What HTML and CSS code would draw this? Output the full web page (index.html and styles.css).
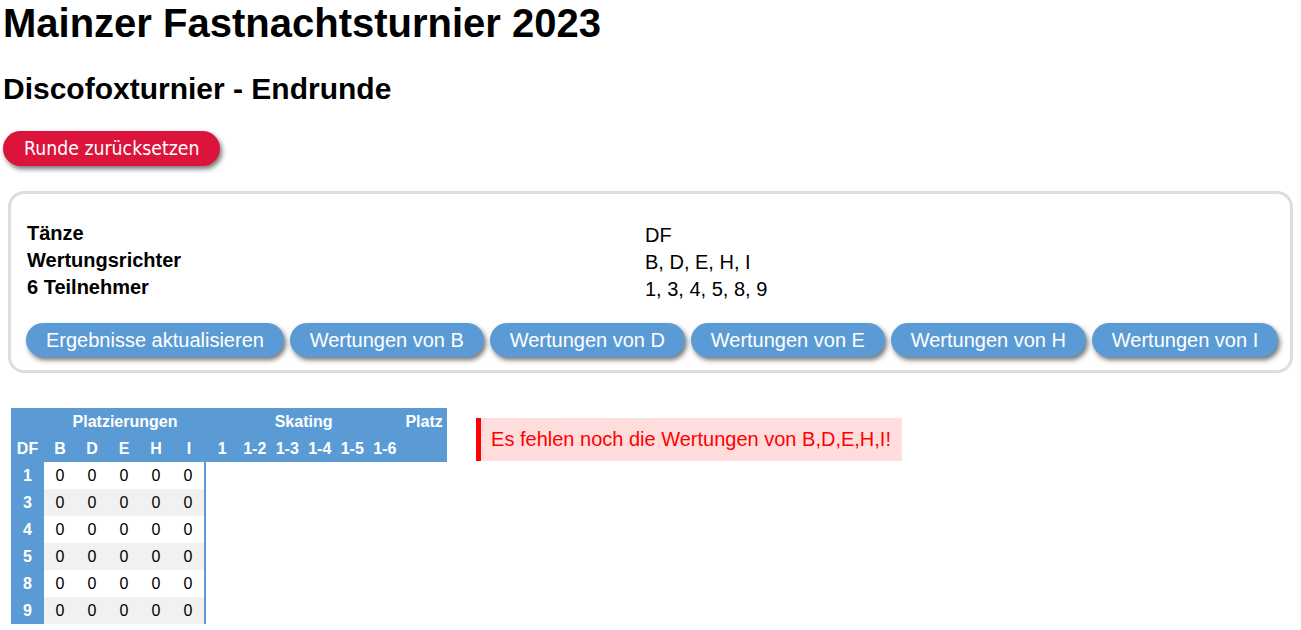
FILE: index.html
```html
<!DOCTYPE html>
<html lang="de">
<head>
<meta charset="utf-8">
<title>Mainzer Fastnachtsturnier 2023</title>
<link rel="stylesheet" href="styles.css">
</head>
<body>
<h1 class="title">Mainzer Fastnachtsturnier 2023</h1>
<h2 class="subtitle">Discofoxturnier - Endrunde</h2>
<button class="btn-reset" type="button">Runde zurücksetzen</button>
<section class="panel">
  <div class="info">
    <div class="info-label">Tänze</div><div class="info-value">DF</div>
    <div class="info-label">Wertungsrichter</div><div class="info-value">B, D, E, H, I</div>
    <div class="info-label">6 Teilnehmer</div><div class="info-value">1, 3, 4, 5, 8, 9</div>
  </div>
  <div class="actions">
    <button class="btn" type="button">Ergebnisse aktualisieren</button>
    <button class="btn" type="button">Wertungen von B</button>
    <button class="btn" type="button">Wertungen von D</button>
    <button class="btn" type="button">Wertungen von E</button>
    <button class="btn" type="button">Wertungen von H</button>
    <button class="btn" type="button">Wertungen von I</button>
  </div>
</section>
<div class="results">
  <table class="scores">
    <colgroup>
      <col class="c-df">
      <col class="c-p" span="4">
      <col class="c-last">
      <col class="c-s" span="6">
      <col class="c-platz">
    </colgroup>
    <thead>
      <tr><th></th><th colspan="5">Platzierungen</th><th colspan="6">Skating</th><th>Platz</th></tr>
      <tr><th>DF</th><th>B</th><th>D</th><th>E</th><th>H</th><th>I</th><th>1</th><th>1-2</th><th>1-3</th><th>1-4</th><th>1-5</th><th>1-6</th><th></th></tr>
    </thead>
    <tbody>
      <tr><th>1</th><td>0</td><td>0</td><td>0</td><td>0</td><td class="last">0</td></tr>
      <tr><th>3</th><td>0</td><td>0</td><td>0</td><td>0</td><td class="last">0</td></tr>
      <tr><th>4</th><td>0</td><td>0</td><td>0</td><td>0</td><td class="last">0</td></tr>
      <tr><th>5</th><td>0</td><td>0</td><td>0</td><td>0</td><td class="last">0</td></tr>
      <tr><th>8</th><td>0</td><td>0</td><td>0</td><td>0</td><td class="last">0</td></tr>
      <tr><th>9</th><td>0</td><td>0</td><td>0</td><td>0</td><td class="last">0</td></tr>
    </tbody>
  </table>
  <div class="alert">Es fehlen noch die Wertungen von B,D,E,H,I!</div>
</div>
</body>
</html>
```

FILE: styles.css
```css
body {
  margin: 0;
  padding: 0 2px;
  font-family: "Liberation Sans", Arial, sans-serif;
  font-size: 20px;
  color: #000;
  background: #fff;
}

.title {
  font-size: 40px;
  line-height: 46px;
  font-weight: bold;
  margin: 0 0 26px;
  padding-left: 1px;
}

.subtitle {
  font-size: 30px;
  line-height: 34px;
  font-weight: bold;
  margin: 0 0 25px;
  padding-left: 1px;
}

.btn-reset {
  display: block;
  margin-left: 1px;
  height: 35px;
  padding: 0 21px;
  border: none;
  border-radius: 18px;
  background: #dc143c;
  color: #fff;
  font-family: "DejaVu Sans Condensed", "DejaVu Sans", sans-serif;
  font-size: 19.3px;
  box-shadow: 2px 3px 5px rgba(0, 0, 0, 0.55);
}

.panel {
  margin: 25px 6px 0 6px;
  border: 3px solid #ddd;
  border-radius: 16px;
  padding: 28px 15px 13px 15px;
}

.info {
  display: grid;
  grid-template-columns: 619px 1fr;
  line-height: 27px;
}

.info-label {
  font-weight: bold;
  margin: -2px 0 2px 1px;
}

.actions {
  display: flex;
  gap: 5.8px;
  margin-top: 20px;
}

.btn {
  height: 34px;
  padding: 0 20px;
  border: none;
  border-radius: 17px;
  background: #5b9bd5;
  color: #fff;
  font-family: "Liberation Sans", Arial, sans-serif;
  font-size: 20px;
  white-space: nowrap;
  box-shadow: 2px 3px 5px rgba(0, 0, 0, 0.55);
}

.results {
  display: flex;
  align-items: flex-start;
  margin: 35px 0 0 9px;
}

.scores {
  table-layout: fixed;
  width: 436px;
  border-collapse: separate;
  border-spacing: 0;
  font-size: 16px;
}

.c-df { width: 33px; }
.c-p { width: 32px; }
.c-last { width: 34px; }
.c-s { width: 32.5px; }
.c-platz { width: 46px; }

.scores th,
.scores td {
  height: 27px;
  padding: 0 4px;
  box-sizing: border-box;
  text-align: center;
  vertical-align: middle;
  white-space: nowrap;
}

.scores thead th {
  background: #5b9bd5;
  color: #fff;
  font-weight: bold;
}

.scores tbody th {
  background: #5b9bd5;
  color: #fff;
  font-weight: bold;
}

.scores tbody td {
  background: #fff;
}

.scores tbody tr:nth-child(even) td {
  background: #f1f1f1;
}

.scores td.last {
  border-right: 2px solid #5b9bd5;
}

.alert {
  margin: 10px 0 0 29px;
  padding: 10px 11px 10px 10px;
  border-left: 5px solid #ff0000;
  background: #ffdddd;
  color: #ff0000;
  line-height: 23px;
  white-space: nowrap;
}
```
